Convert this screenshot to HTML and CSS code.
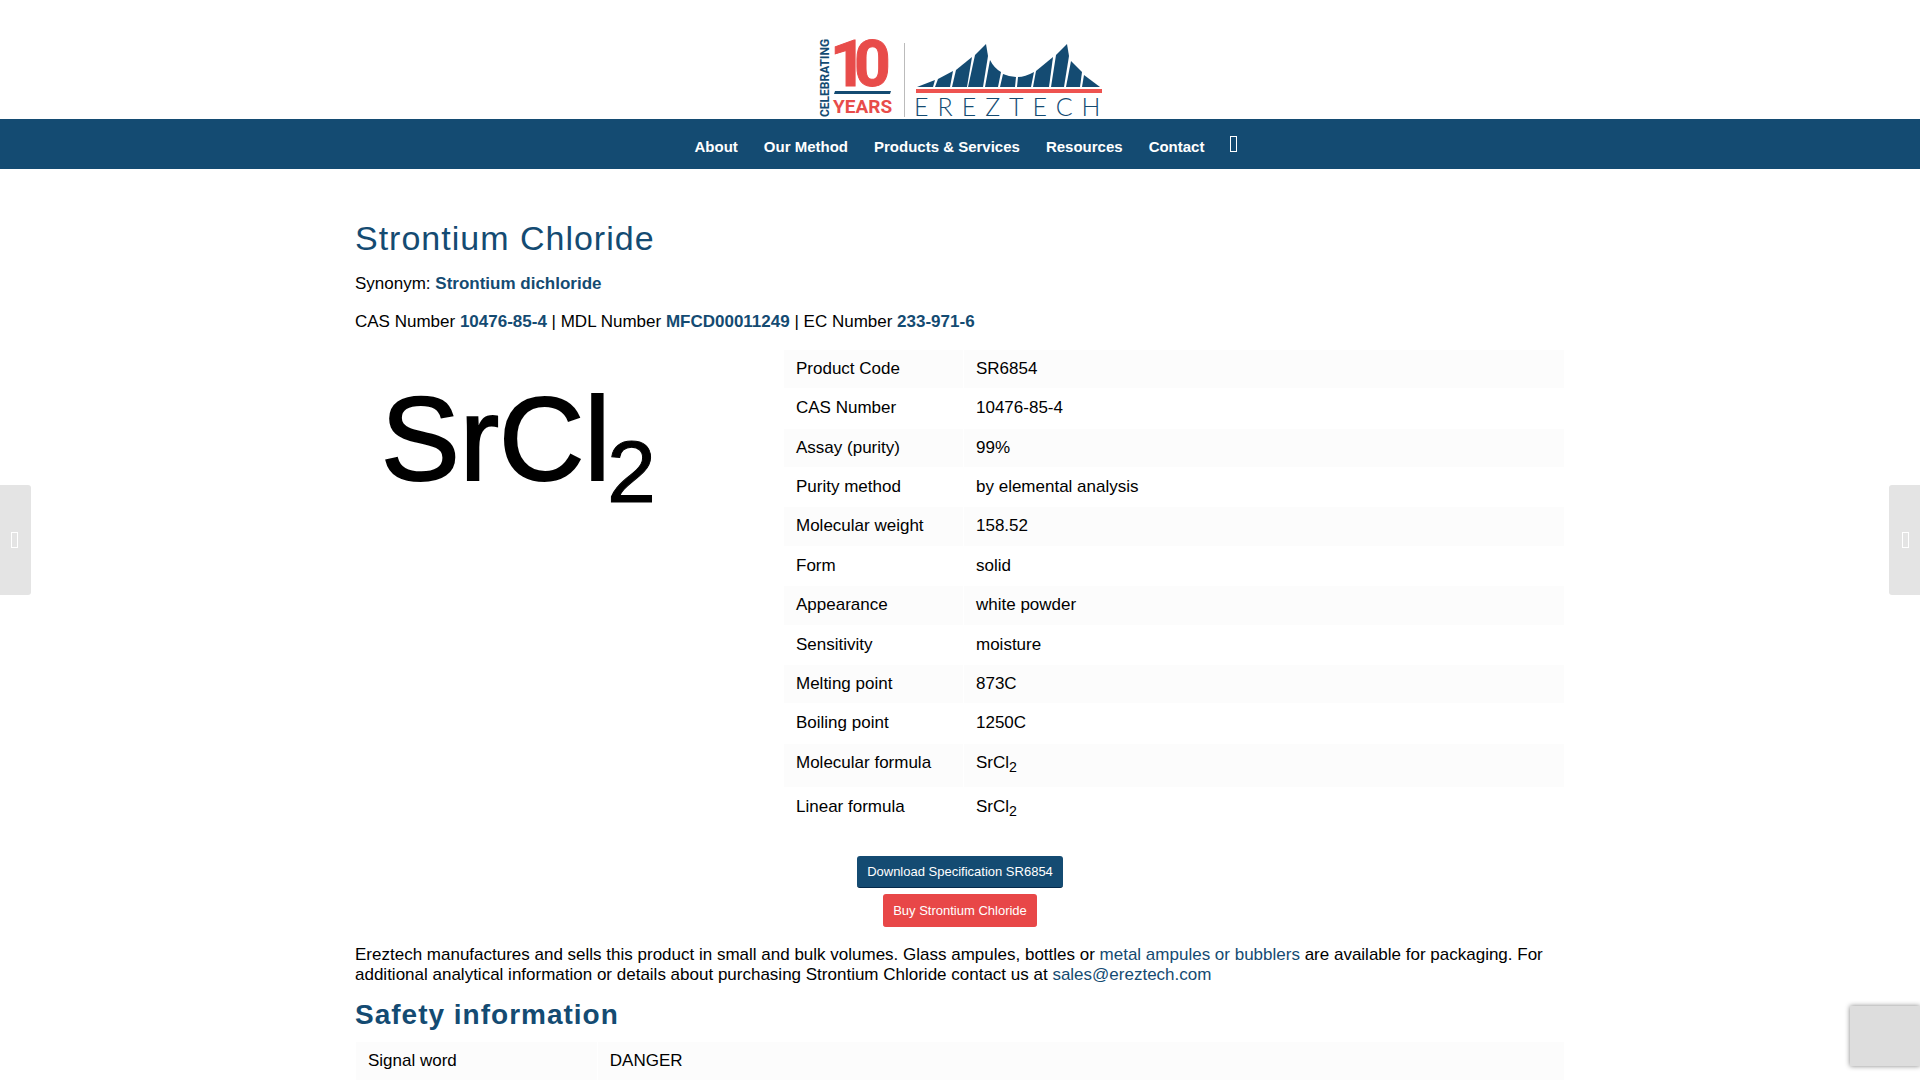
FILE: index.html
```html
<!DOCTYPE html>
<html lang="en">
<head>
<meta charset="utf-8">
<title>Strontium Chloride | Ereztech</title>
<link rel="stylesheet" href="styles.css">
</head>
<body>
<header>
  <div class="brand">
    <a href="#" aria-label="Ereztech home">
      <svg class="logo" width="284" height="82" viewBox="0 0 284 82">
        <text class="logo-celebrating" transform="translate(11 80) rotate(-90)">CELEBRATING</text>
        <text class="logo-ten" x="12 36" y="49">10</text>
        <path fill="#144b72" d="M17 54h56l-1 3H16z"/>
        <text class="logo-years" x="15" y="76">YEARS</text>
        <path fill="#bbb" d="M86 6h1v74h-1z"/>
        <g fill="#144b72">
          <path d="M99 50L117 43L115 50z"/>
          <path d="M120 42L135 34L132 50H117z"/>
          <path d="M138 33L154 20L149 50H134z"/>
          <path d="M157 18L168 7L170 19L165 50H150z"/>
          <path d="M172 23Q176 31 183 35L180 50H167z"/>
          <path d="M185 37Q192 40 198 40L197 50H182z"/>
          <path d="M200 40Q207 40 216 35L213 50H199z"/>
          <path d="M218 34L235 20L231 50H215z"/>
          <path d="M238 18L249 7L251 19L246 50H233z"/>
          <path d="M253 24L264 35L262 50H248z"/>
          <path d="M266 38L282 50H264z"/>
        </g>
        <path fill="#ee5350" d="M98 52h186v4H98z"/>
        <text class="logo-name" x="96" y="79">EREZTECH</text>
      </svg>
    </a>
  </div>
  <nav class="menu">
    <a href="#">About</a>
    <a href="#">Our Method</a>
    <a href="#">Products &amp; Services</a>
    <a href="#">Resources</a>
    <a href="#">Contact</a>
    <a class="search" href="#" aria-label="Search"><span class="glyph"></span></a>
  </nav>
</header>

<main>
  <h1>Strontium Chloride</h1>
  <p>Synonym: <strong>Strontium dichloride</strong></p>
  <p>CAS Number <strong>10476-85-4</strong> | MDL Number <strong>MFCD00011249</strong> | EC Number <strong>233-971-6</strong></p>

  <div class="product">
    <div class="structure">
      <svg width="320" height="180" viewBox="0 0 320 180">
        <text class="formula" x="26" y="131">SrCl</text>
        <text class="formula-index" x="252" y="153">2</text>
      </svg>
    </div>
    <table class="specs">
      <tbody>
        <tr><td>Product Code</td><td>SR6854</td></tr>
        <tr><td>CAS Number</td><td>10476-85-4</td></tr>
        <tr><td>Assay (purity)</td><td>99%</td></tr>
        <tr><td>Purity method</td><td>by elemental analysis</td></tr>
        <tr><td>Molecular weight</td><td>158.52</td></tr>
        <tr><td>Form</td><td>solid</td></tr>
        <tr><td>Appearance</td><td>white powder</td></tr>
        <tr><td>Sensitivity</td><td>moisture</td></tr>
        <tr><td>Melting point</td><td>873C</td></tr>
        <tr><td>Boiling point</td><td>1250C</td></tr>
        <tr><td>Molecular formula</td><td>SrCl<sub>2</sub></td></tr>
        <tr><td>Linear formula</td><td>SrCl<sub>2</sub></td></tr>
      </tbody>
    </table>
  </div>

  <div class="actions">
    <a class="button" href="#">Download Specification SR6854</a>
    <a class="button buy" href="#">Buy Strontium Chloride</a>
  </div>

  <p class="summary">Ereztech manufactures and sells this product in small and bulk volumes. Glass ampules, bottles or <a href="#">metal ampules or bubblers</a> are available for packaging. For additional analytical information or details about purchasing Strontium Chloride contact us at <a href="#">sales@ereztech.com</a></p>

  <h2>Safety information</h2>
  <table class="safety">
    <tbody>
      <tr><td>Signal word</td><td>DANGER</td></tr>
    </tbody>
  </table>
</main>

<a class="pager previous" href="#" aria-label="Previous product"><span class="glyph"></span></a>
<a class="pager next" href="#" aria-label="Next product"><span class="glyph"></span></a>
<div class="captcha"></div>
</body>
</html>
```

FILE: styles.css
```css
* { box-sizing: border-box; }

body {
  margin: 0;
  background: #fff;
  color: #000;
  font: 17px/1.2 "Liberation Sans", Arial, sans-serif;
}

a { color: #144b72; text-decoration: none; }
strong { color: #144b72; }

/* Header */
.brand {
  display: flex;
  justify-content: center;
  align-items: flex-end;
  height: 119px;
}
.brand a { display: block; height: 82px; }
.logo { display: block; overflow: visible; }
.logo text { font-family: Roboto, sans-serif; font-weight: 700; }
.logo .logo-celebrating { font-size: 12px; fill: #144b72; }
.logo .logo-ten {
  font-size: 64px;
  fill: #e84c4a;
  stroke: #e84c4a;
  stroke-width: 1px;
}
.logo .logo-years { font-size: 19px; fill: #e84c4a; }
.logo .logo-name {
  font-family: Lato, sans-serif;
  font-size: 25px;
  font-weight: 300;
  letter-spacing: 9px;
  fill: #144b72;
}

.menu {
  display: flex;
  justify-content: center;
  height: 50px;
  background: #144b72;
}
.menu a {
  padding: 0 13px;
  color: #fff;
  font-size: 15px;
  font-weight: 700;
  line-height: 56px;
}
.menu .search { padding: 17px 1px 0 13px; line-height: 1; }
.glyph {
  display: block;
  width: 7px;
  height: 16px;
  border: 1px solid #fff;
}

/* Content */
main {
  max-width: 1210px;
  margin: 0 auto;
  padding-top: 49px;
}
h1, h2 {
  color: #144b72;
  letter-spacing: 1px;
}
h1 {
  margin: 0 0 16px;
  font-size: 34px;
  font-weight: 400;
  line-height: 40px;
}
h2 {
  margin: 14px 0 11px;
  font-size: 28px;
  font-weight: 700;
  line-height: 30px;
}
p { margin: 0 0 18px; }
p.summary { margin-bottom: 15px; line-height: 20px; }

.product {
  display: grid;
  grid-template-columns: 355fr 782fr;
  gap: 73px;
  margin-top: -2px;
}
.structure svg { display: block; }
.formula, .formula-index {
  font-size: 118px;
  stroke: #000;
  stroke-width: 2px;
}
.formula-index { font-size: 88px; stroke-width: 1px; }

table {
  width: 100%;
  border-collapse: collapse;
  table-layout: fixed;
}
td {
  padding: 9px 12px;
  border: 1px solid #fff;
  vertical-align: top;
}
tr:nth-child(odd) td { background: #fcfcfc; }
.specs td:first-child { width: 180px; }
.safety td:first-child { width: 20%; }
sub { line-height: 21px; }

.actions {
  display: flex;
  flex-direction: column;
  align-items: center;
  gap: 6px;
  margin: 24px 0 18px;
}
.button {
  padding: 8px 10px;
  border-bottom: 1px solid #04294a;
  border-radius: 3px;
  background: #144b72;
  color: #fff;
  font-size: 13px;
  line-height: 15px;
}
.buy { padding-top: 9px; border-color: #e84748; background: #e84748; }

/* Floating elements */
.pager {
  position: fixed;
  top: 50%;
  display: flex;
  align-items: center;
  width: 31px;
  height: 110px;
  margin-top: -55px;
  padding-left: 11px;
  background: #e4e4e4;
}
.previous { left: 0; border-radius: 0 3px 3px 0; }
.next { right: 0; padding-left: 13px; border-radius: 3px 0 0 3px; }

.captcha {
  position: fixed;
  right: 0;
  bottom: 14px;
  width: 70px;
  height: 60px;
  background: #ddd;
  box-shadow: 0 0 5px #808080;
}
```
